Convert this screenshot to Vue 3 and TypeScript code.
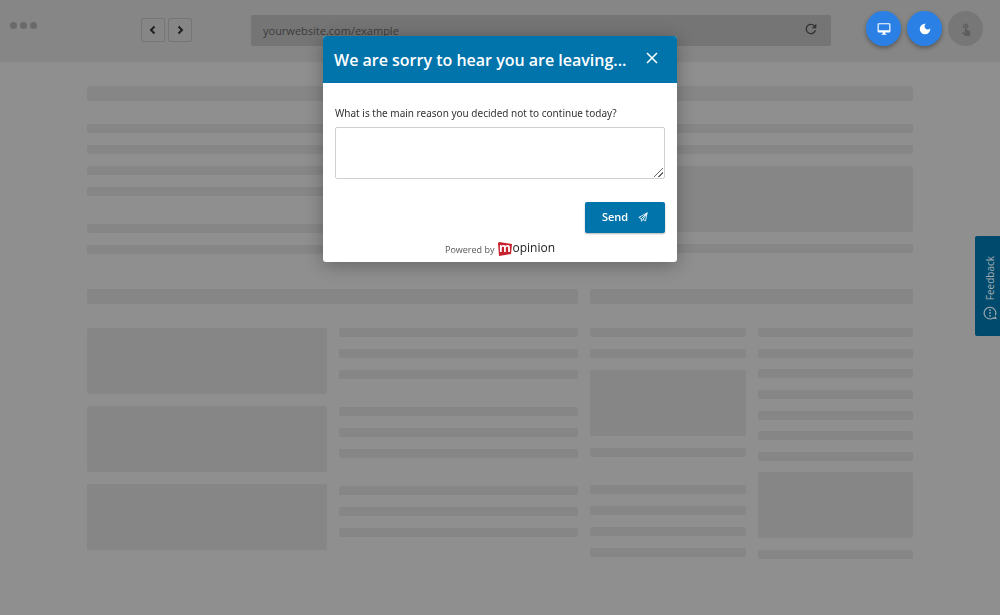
<script setup lang="ts">
import { ref } from 'vue'

type Block = 'bar' | 'box'

const address = ref('yourwebsite.com/example')
const reason = ref('')
const open = ref(true)

const introLeft: Block[][] = [['bar', 'bar', 'bar', 'bar'], ['bar', 'bar']]
const introRight: Block[][] = [['bar', 'bar', 'box', 'bar']]
const lines: Block[][] = [['bar', 'bar', 'bar'], ['bar', 'bar', 'bar'], ['bar', 'bar', 'bar']]
const boxes: Block[][] = [['box', 'box', 'box']]
const sideA: Block[][] = [['bar', 'bar', 'box', 'bar'], ['bar', 'bar', 'bar', 'bar']]
const sideB: Block[] = ['bar', 'bar', 'bar', 'bar', 'bar', 'bar', 'bar', 'box', 'bar']
</script>

<template>
  <div class="page">
    <header class="toolbar">
      <div class="dots"><i></i><i></i><i></i></div>
      <nav class="history">
        <button type="button" aria-label="Back">
          <svg viewBox="0 0 10 10"><path d="M6.5 1.5 3 5l3.500 3.500" /></svg>
        </button>
        <button type="button" aria-label="Forward">
          <svg viewBox="0 0 10 10"><path d="M3.500 1.500 7 5 3.500 8.500" /></svg>
        </button>
      </nav>
      <div class="address">
        <input v-model="address" type="text" aria-label="Address" />
        <button type="button" class="reload" aria-label="Reload">
          <svg viewBox="0 0 24 24"><path d="M17.650 6.350A7.950 7.950 0 0 0 12 4a8 8 0 1 0 7.730 10h-2.080A6 6 0 1 1 12 6c1.660 0 3.140.69 4.220 1.780L13 11h7V4z" /></svg>
        </button>
      </div>
      <div class="modes">
        <button type="button" class="mode" aria-label="Desktop view">
          <svg viewBox="0 0 24 24"><path d="M21 2H3a2 2 0 0 0-2 2v12c0 1.100.9 2 2 2h7v2H8v2h8v-2h-2v-2h7a2 2 0 0 0 2-2V4a2 2 0 0 0-2-2zm0 12H3V4h18z" /></svg>
        </button>
        <button type="button" class="mode" aria-label="Dark mode">
          <svg viewBox="0 0 24 24"><path d="M12 3a9 9 0 1 0 9 9c0-.46-.04-.92-.1-1.360A5.400 5.400 0 1 1 13.360 3.100 9 9 0 0 0 12 3z" /></svg>
        </button>
        <button type="button" class="mode off" aria-label="Touch mode">
          <svg viewBox="0 0 24 24"><path d="M9 11.240V7.500a2.500 2.500 0 0 1 5 0v3.740a4.500 4.500 0 1 0-5 0zm9.840 4.630-4.540-2.260c-.17-.07-.35-.11-.54-.11H13v-6a1.500 1.500 0 0 0-3 0v10.740l-3.430-.72c-.37-.08-.76.05-1.030.320l-.79.800 4.940 4.940c.27.270.65.440 1.060.440h6.790c.75 0 1.330-.55 1.440-1.280l.75-5.270c.1-.68-.28-1.330-.89-1.600z" /></svg>
        </button>
      </div>
    </header>

    <main class="skeleton">
      <div class="heading"></div>
      <div class="split">
        <div class="stack">
          <div v-for="(g, i) in introLeft" :key="i" class="group"><div v-for="(b, j) in g" :key="j" :class="b"></div></div>
        </div>
        <div class="stack">
          <div v-for="(g, i) in introRight" :key="i" class="group"><div v-for="(b, j) in g" :key="j" :class="b"></div></div>
        </div>
      </div>
      <div class="split second">
        <section>
          <div class="heading"></div>
          <div class="pair">
            <div class="stack">
              <div v-for="(g, i) in boxes" :key="i" class="group"><div v-for="(b, j) in g" :key="j" :class="b"></div></div>
            </div>
            <div class="stack">
              <div v-for="(g, i) in lines" :key="i" class="group"><div v-for="(b, j) in g" :key="j" :class="b"></div></div>
            </div>
          </div>
        </section>
        <section>
          <div class="heading"></div>
          <div class="pair">
            <div class="stack">
              <div v-for="(g, i) in sideA" :key="i" class="group"><div v-for="(b, j) in g" :key="j" :class="b"></div></div>
            </div>
            <div class="spread"><div v-for="(b, j) in sideB" :key="j" :class="b"></div></div>
          </div>
        </section>
      </div>
    </main>

    <button type="button" class="feedback" @click="open = true">
      <svg viewBox="0 0 24 24">
        <path d="M6 20.500 2.500 22l1-4.500A10 10 0 1 1 8 21.200" />
        <path class="inner" d="M7 12h.1M12 12h.1M17 12h.1" />
      </svg>
      <span>Feedback</span>
    </button>

    <div v-if="open" class="overlay">
      <form class="modal" role="dialog" aria-labelledby="survey-title" @submit.prevent="open = false">
        <div class="modal-head">
          <h1 id="survey-title">We are sorry to hear you are leaving...</h1>
          <button type="button" class="close" aria-label="Close" @click="open = false">
            <svg viewBox="0 0 12 12"><path d="m1 1 10 10M11 1 1 11" /></svg>
          </button>
        </div>
        <div class="modal-body">
          <label for="reason">What is the main reason you decided not to continue today?</label>
          <textarea id="reason" v-model="reason"></textarea>
          <button type="submit" class="send">
            Send
            <svg viewBox="0 0 24 24"><path d="M22 2 2 13l6 3v6l4-4 6 3zM8 16 22 2 12 18" /></svg>
          </button>
          <div class="powered">
            <span>Powered by</span>
            <a href="#" class="brand">
              <svg viewBox="0 0 14 14">
                <path d="M1 0 14 2 13 12 1 14 0 1z" />
                <text x="7" y="10" text-anchor="middle">m</text>
              </svg>
              <span>opinion</span>
            </a>
          </div>
        </div>
      </form>
    </div>
  </div>
</template>

<style>
body {
  margin: 0;
  background: #8f8f8f;
}
</style>

<style scoped>
.page {
  min-height: 100vh;
  background: #8f8f8f;
  font-family: "Open Sans", "Noto Sans", sans-serif;
}
* {
  box-sizing: border-box;
}
button {
  padding: 0;
  border: 0;
  background: none;
  font: inherit;
  cursor: pointer;
}
svg {
  display: block;
}
.toolbar {
  display: flex;
  align-items: flex-start;
  height: 62px;
  padding: 11px 17px 0 10px;
  background: #868686;
}
.dots {
  display: flex;
  gap: 3px;
  width: 131px;
  margin-top: 11px;
}
.dots i {
  width: 7px;
  height: 7px;
  border-radius: 50%;
  background: #6a6a6a;
}
.history {
  display: flex;
  gap: 3px;
  width: 110px;
  margin-top: 7px;
}
.history button {
  display: grid;
  place-items: center;
  width: 24px;
  height: 24px;
  border: 1px solid #757575;
  border-radius: 2px;
}
.history svg {
  width: 10px;
  height: 10px;
  fill: none;
  stroke: #202020;
  stroke-width: 2;
}
.address {
  display: flex;
  flex: 1;
  align-items: center;
  height: 31px;
  margin-top: 4px;
  padding: 0 12px;
  border-radius: 2px;
  background: #757575;
}
.address input {
  flex: 1;
  min-width: 0;
  padding: 0;
  border: 0;
  outline: 0;
  background: none;
  color: #3c3c3c;
  font: 11px "Open Sans", sans-serif;
}
.reload svg {
  width: 16px;
  height: 16px;
  margin-bottom: 3px;
  fill: #333;
}
.modes {
  display: flex;
  gap: 6px;
  margin-left: 35px;
}
.mode {
  display: grid;
  place-items: center;
  width: 35px;
  height: 35px;
  border-radius: 50%;
  background: #2b80e6;
  box-shadow: 0 2px 4px rgba(0, 0, 0, 0.35);
}
.mode svg {
  width: 14px;
  height: 14px;
  fill: #fff;
}
.mode.off {
  background: #777;
  box-shadow: none;
}
.mode.off svg {
  fill: #5e5e5e;
}
.skeleton {
  padding: 24px 87px;
}
.heading {
  height: 15px;
  margin-bottom: 23px;
  border-radius: 2px;
  background: #868686;
}
.split {
  display: grid;
  grid-template-columns: 491fr 323fr;
  gap: 12px;
}
.second {
  margin-top: 35px;
}
.second .heading {
  margin-bottom: 24px;
}
.pair {
  display: grid;
  grid-template-columns: 1fr 1fr;
  align-items: start;
  gap: 12px;
}
.stack {
  display: flex;
  flex-direction: column;
  gap: 28px;
}
.group {
  display: flex;
  flex-direction: column;
  gap: 12px;
}
.spread {
  display: flex;
  flex-direction: column;
  justify-content: space-between;
  height: 231px;
}
.bar {
  height: 9px;
  border-radius: 2px;
  background: #868686;
}
.box {
  height: 66px;
  border-radius: 2px;
  background: #868686;
}
.feedback {
  position: fixed;
  top: 236px;
  right: 0;
  display: flex;
  flex-direction: column-reverse;
  align-items: center;
  justify-content: center;
  gap: 6px;
  width: 25px;
  height: 100px;
  padding: 4px 0 0 4px;
  border-radius: 2px 0 0 2px;
  background: #004a6d;
  color: #a3abb0;
  font-size: 10px;
}
.feedback span {
  line-height: 14px;
  writing-mode: vertical-rl;
  transform: rotate(180deg);
}
.feedback svg {
  width: 14px;
  height: 14px;
  transform: rotate(-90deg);
  fill: none;
  stroke: #a3abb0;
  stroke-width: 2;
}
.feedback .inner {
  stroke-width: 3;
  stroke-linecap: round;
}
.overlay {
  position: fixed;
  inset: 0;
  display: flex;
  align-items: flex-start;
  justify-content: center;
  padding-top: 36px;
  pointer-events: none;
}
.modal {
  width: 354px;
  max-width: 100%;
  border-radius: 3px;
  background: #fff;
  box-shadow: 0 3px 18px rgba(0, 0, 0, 0.3);
  pointer-events: auto;
}
.modal-head {
  display: flex;
  align-items: center;
  justify-content: space-between;
  height: 47px;
  padding: 0 19px 0 11px;
  border-radius: 3px 3px 0 0;
  background: #0274ac;
}
h1 {
  margin: 0;
  color: #fff;
  font-size: 16px;
  font-weight: 600;
  line-height: 24px;
  white-space: nowrap;
}
.close svg {
  width: 12px;
  height: 12px;
  margin-bottom: 4px;
  fill: none;
  stroke: #fff;
  stroke-width: 1.5;
}
.modal-body {
  display: flex;
  flex-direction: column;
  padding: 22px 12px 5px;
}
label {
  margin-bottom: 6px;
  color: #333;
  font-family: "Noto Sans", sans-serif;
  font-size: 10px;
  line-height: 16px;
}
textarea {
  height: 52px;
  border: 1px solid #d0d0d0;
  border-radius: 2px;
  outline: 0;
  background: #fff;
  font: 11px "Open Sans", sans-serif;
  resize: vertical;
}
textarea::-webkit-resizer {
  background: linear-gradient(135deg, transparent 45%, #666 45%, #666 55%, transparent 55%, transparent 70%, #666 70%, #666 80%, transparent 80%) no-repeat 5px 5px / 9px 9px;
}
.send {
  display: flex;
  align-items: center;
  align-self: flex-end;
  justify-content: center;
  gap: 10px;
  width: 80px;
  height: 31px;
  margin-top: 23px;
  padding-bottom: 2px;
  border-radius: 2px;
  background: #0274ac;
  box-shadow: 0 1px 2px rgba(0, 0, 0, 0.3);
  color: #fff;
  font-size: 11px;
  font-weight: 600;
}
.send svg {
  width: 10px;
  height: 10px;
  fill: none;
  stroke: #fff;
  stroke-width: 2;
}
.powered {
  display: flex;
  align-items: center;
  justify-content: center;
  gap: 4px;
  height: 16px;
  margin-top: 8px;
  color: #555;
  font-size: 9px;
}
.brand {
  display: flex;
  align-items: center;
  color: #222;
  font-size: 12px;
  font-weight: 500;
  line-height: 14px;
  text-decoration: none;
}
.brand span {
  padding-bottom: 2px;
}
.brand svg {
  width: 14px;
  height: 14px;
  overflow: visible;
  fill: #c8202c;
}
.brand text {
  fill: #fff;
  font-size: 12px;
  font-weight: 700;
}
</style>
